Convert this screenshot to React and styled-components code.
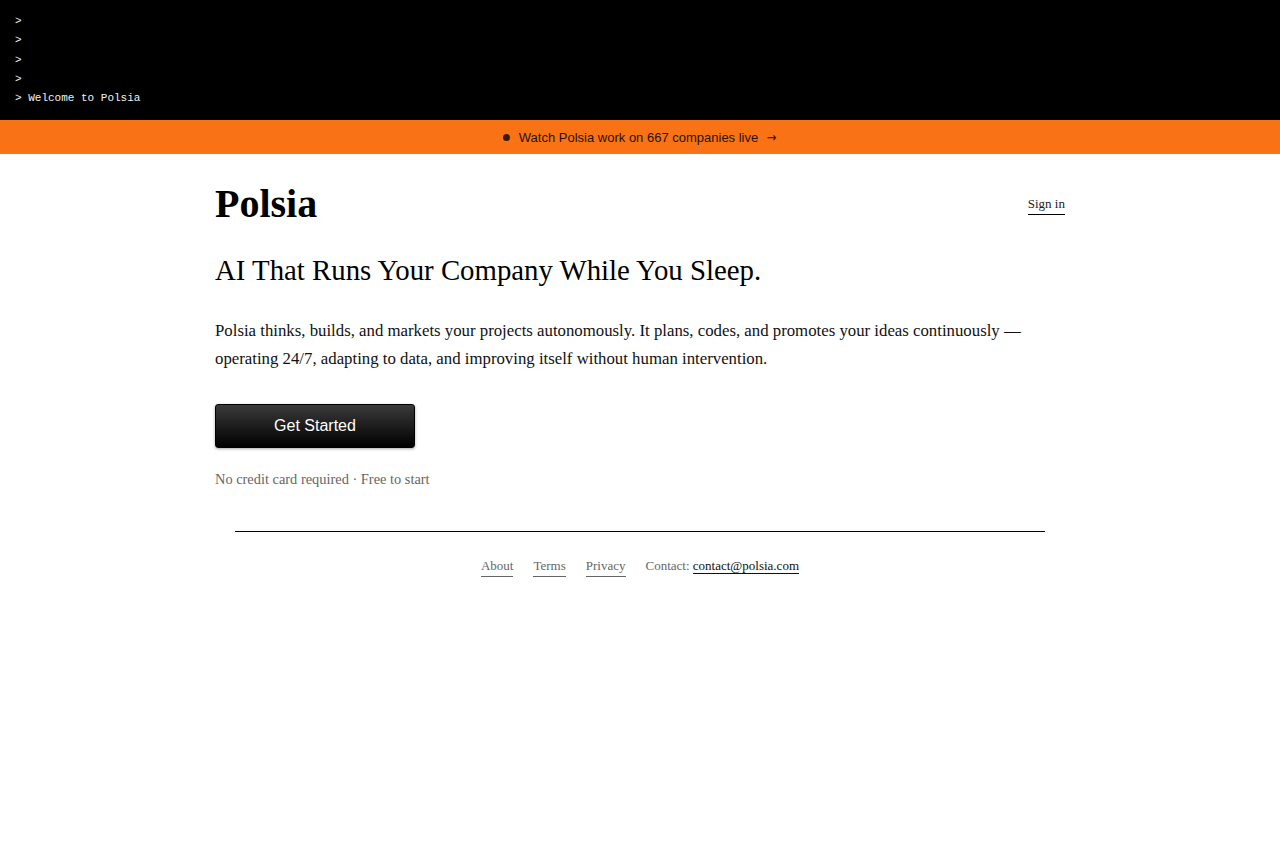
import styled, { createGlobalStyle } from "styled-components";

const Global = createGlobalStyle`
	html, body { margin: 0; padding: 0; background: #fff; }
	body { font-family: "Liberation Serif", "Times New Roman", serif; color: #000; }
	* { box-sizing: border-box; }
`;

const Terminal = styled.div`
	background: #000;
	height: 120px;
	padding: 12px 15px 0;
	font-family: "Liberation Mono", "Courier New", monospace;
	font-size: 11px;
	line-height: 19.25px;
	color: #f2f2f2;
	white-space: pre;
`;

const Banner = styled.a`
	display: flex;
	align-items: center;
	justify-content: center;
	gap: 8px;
	height: 34px;
	background: #f97316;
	color: #2a1206;
	font-family: "Liberation Sans", Arial, sans-serif;
	font-size: 13px;
	text-decoration: none;
`;

const Dot = styled.span`
	width: 7px;
	height: 7px;
	border-radius: 50%;
	background: #3a1a08;
	margin-right: 1px;
`;

const Arrow = styled.span`
	margin-left: 0;
	font-family: "DejaVu Sans", sans-serif;
	font-size: 13px;
	transform: scaleX(0.9);
`;

const Main = styled.main`
	width: 850px;
	margin: 0 auto;
`;

const Header = styled.header`
	display: flex;
	align-items: center;
	justify-content: space-between;
	padding-top: 26px;
`;

const Logo = styled.h1`
	margin: 0;
	font-size: 40px;
	line-height: 48px;
	font-weight: 700;
`;

const SignIn = styled.a`
	font-size: 13px;
	color: #222;
	text-decoration: none;
	border-bottom: 1.5px solid #000;
	padding-bottom: 2px;
	margin-top: 3px;
`;

const Tagline = styled.h2`
	margin: 24px 0 0;
	font-size: 28.8px;
	line-height: 36px;
	font-weight: 400;
`;

const Lead = styled.p`
	margin: 29px 0 0;
	font-size: 16.8px;
	line-height: 28px;
	color: #111;
`;

const CTA = styled.button`
	margin-top: 31px;
	width: 200px;
	height: 44px;
	border: 1px solid #000;
	border-radius: 3px;
	background: linear-gradient(#3a3a3a, #000);
	box-shadow: 0 1px 3px rgba(0, 0, 0, 0.35);
	color: #fff;
	font-family: "Liberation Sans", Arial, sans-serif;
	font-size: 16px;
	cursor: pointer;
`;

const Note = styled.p`
	margin: 21px 0 0;
	font-size: 14.4px;
	line-height: 20px;
	color: #666;
`;

const Footer = styled.footer`
	margin: 42px 20px 0;
	border-top: 1px solid #000;
	padding-top: 24px;
	display: flex;
	justify-content: center;
	gap: 20px;
	font-size: 13px;
	line-height: 20px;
	color: #666;
`;

const FootLink = styled.a`
	color: ${(p) => (p.$dark ? "#111" : "#666")};
	text-decoration: none;
	border-bottom: 1px solid ${(p) => (p.$dark ? "#111" : "#666")};
`;

const Contact = styled.span``;

export default function App() {
	return (
		<>
			<Global />
			<Terminal>{">\n>\n>\n>\n> Welcome to Polsia"}</Terminal>
			<Banner href="#">
				<Dot />
				<span>Watch Polsia work on 667 companies live</span>
				<Arrow>→</Arrow>
			</Banner>
			<Main>
				<Header>
					<Logo>Polsia</Logo>
					<SignIn href="#">Sign in</SignIn>
				</Header>
				<Tagline>AI That Runs Your Company While You Sleep.</Tagline>
				<Lead>
					Polsia thinks, builds, and markets your projects autonomously. It plans, codes, and promotes your ideas continuously — operating 24/7, adapting to data, and improving itself without human intervention.
				</Lead>
				<CTA>Get Started</CTA>
				<Note>No credit card required · Free to start</Note>
				<Footer>
					<FootLink href="#">About</FootLink>
					<FootLink href="#">Terms</FootLink>
					<FootLink href="#">Privacy</FootLink>
					<Contact>
						Contact: <FootLink $dark href="#">contact@polsia.com</FootLink>
					</Contact>
				</Footer>
			</Main>
		</>
	);
}
